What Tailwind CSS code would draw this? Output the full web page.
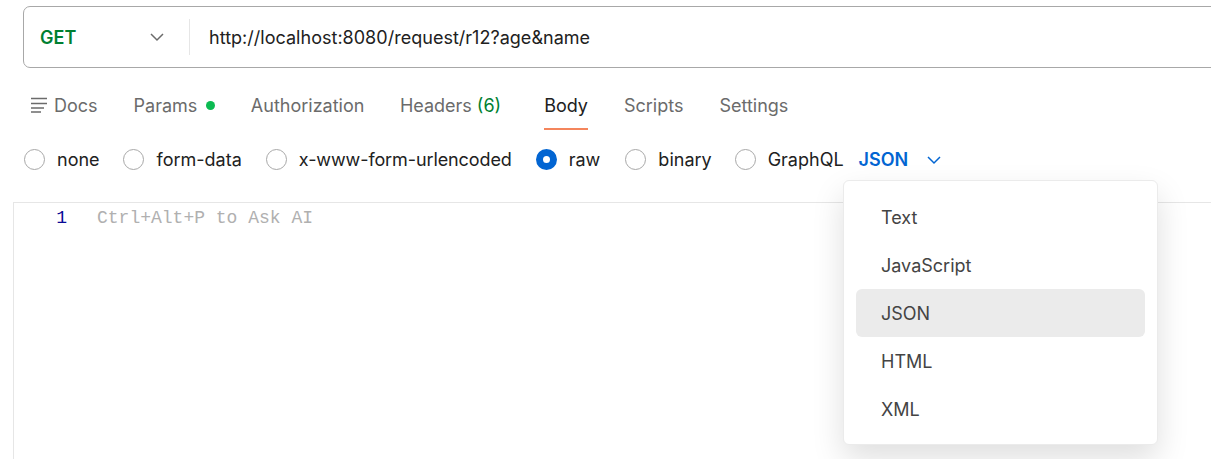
<!DOCTYPE html>
<html lang="en">
<head>
  <meta charset="UTF-8" />
  <title>Request body</title>
  <script src="https://cdn.jsdelivr.net/npm/@tailwindcss/browser@4"></script>
</head>
<body class="bg-white font-['Inter',sans-serif] overflow-hidden">
  <div class="relative h-[459px] w-[1211px] overflow-hidden">
    <!-- url bar -->
    <div class="pt-[6px] pl-[23px]">
      <div class="flex h-[62px] w-[1200px] items-center rounded-l-[7px] border border-[#a8a8a8]">
        <div class="flex h-[36px] w-[166px] items-center justify-between border-r border-[#e6e6e6] pl-[16px] pr-[24px]">
          <span class="text-[18px] font-semibold text-[#007f31]">GET</span>
          <svg width="16" height="16" viewBox="0 0 16 16" fill="none" stroke="#6b6b6b" stroke-width="1.5"><path d="M2 5l6 6 6-6"/></svg>
        </div>
        <span class="pl-[19px] text-[18px] tracking-[0.02px] text-[#212121]">http://localhost:8080/request/r12?age&amp;name</span>
      </div>
    </div>

    <!-- tabs -->
    <div class="flex h-[62px] items-start pl-[31px] text-[18px] text-[#6b6b6b]">
      <div class="mr-[36px] flex h-[62px] items-center gap-[6px] pt-[12px]">
        <svg width="17" height="16" viewBox="0 0 17 16" fill="none" stroke="#6b6b6b" stroke-width="1.5"><path d="M0 1.500h16M0 6.500h16M0 11h13M0 15h10"/></svg>
        <span>Docs</span>
      </div>
      <div class="mr-[35.5px] flex h-[62px] items-center gap-[9px] pt-[12px]">
        <span>Params</span>
        <span class="h-[9px] w-[9px] rounded-full bg-[#0cbb52]"></span>
      </div>
      <div class="mr-[35.5px] flex h-[62px] items-center pt-[12px]">Authorization</div>
      <div class="mr-[43px] flex h-[62px] items-center gap-[5px] pt-[12px]">Headers <span class="text-[#007f31]">(6)</span></div>
      <div class="relative mr-[36px] flex h-[62px] items-center pt-[12px] text-[#212121]">Body
        <span class="absolute right-0 bottom-0 left-0 h-[2px] bg-[#f4855c]"></span>
      </div>
      <div class="mr-[36px] flex h-[62px] items-center pt-[12px]">Scripts</div>
      <div class="flex h-[62px] items-center pt-[12px]">Settings</div>
    </div>

    <!-- body types -->
    <div class="flex h-[72px] items-center pb-[13px] pl-[24px] text-[18px] text-[#212121]">
      <div class="mr-[23px] flex items-center gap-[12px]"><span class="h-[21px] w-[21px] rounded-full border border-[#a8a8a8]"></span>none</div>
      <div class="mr-[24px] flex items-center gap-[13px]"><span class="h-[21px] w-[21px] rounded-full border border-[#a8a8a8]"></span>form-data</div>
      <div class="mr-[24px] flex items-center gap-[12px] tracking-[-0.1px]"><span class="h-[21px] w-[21px] rounded-full border border-[#a8a8a8]"></span>x-www-form-urlencoded</div>
      <div class="mr-[25px] flex items-center gap-[12px]"><span class="h-[21px] w-[21px] rounded-full border-[7px] border-[#0265d2] bg-white"></span>raw</div>
      <div class="mr-[23px] flex items-center gap-[12px]"><span class="h-[21px] w-[21px] rounded-full border border-[#a8a8a8]"></span>binary</div>
      <div class="mr-[15px] flex items-center gap-[12px]"><span class="h-[21px] w-[21px] rounded-full border border-[#a8a8a8]"></span>GraphQL</div>
      <div class="flex items-center gap-[18px] font-semibold text-[#0265d2]">JSON
        <svg width="16" height="16" viewBox="0 0 16 16" fill="none" stroke="#0265d2" stroke-width="1.5"><path d="M2 5l6 6 6-6"/></svg>
      </div>
    </div>

    <!-- editor -->
    <div class="ml-[13px] flex h-[257px] items-start border-t border-l border-[#e6e6e6] pt-[4px]">
      <span class="w-[53px] text-right font-['Liberation_Mono',monospace] text-[18px] leading-[22px] text-[#0a0a96]">1</span>
      <span class="pl-[30px] font-['Liberation_Mono',monospace] text-[18px] leading-[22px] text-[#b0b0b0]">Ctrl+Alt+P to Ask AI</span>
    </div>

    <!-- language menu -->
    <div class="absolute top-[180px] left-[843px] w-[315px] rounded-[6px] border border-[#ebebeb] bg-white px-[12px] pt-[12px] pb-[11px] text-[18px] text-[#444444] shadow-[0_14px_32px_rgba(0,0,0,0.13)]">
      <div class="flex h-[48px] items-center px-[25px]">Text</div>
      <div class="flex h-[48px] items-center px-[25px]">JavaScript</div>
      <div class="flex h-[48px] items-center rounded-[6px] bg-[#ebebeb] px-[25px]">JSON</div>
      <div class="flex h-[48px] items-center px-[25px]">HTML</div>
      <div class="flex h-[48px] items-center px-[25px]">XML</div>
    </div>
  </div>
</body>
</html>
